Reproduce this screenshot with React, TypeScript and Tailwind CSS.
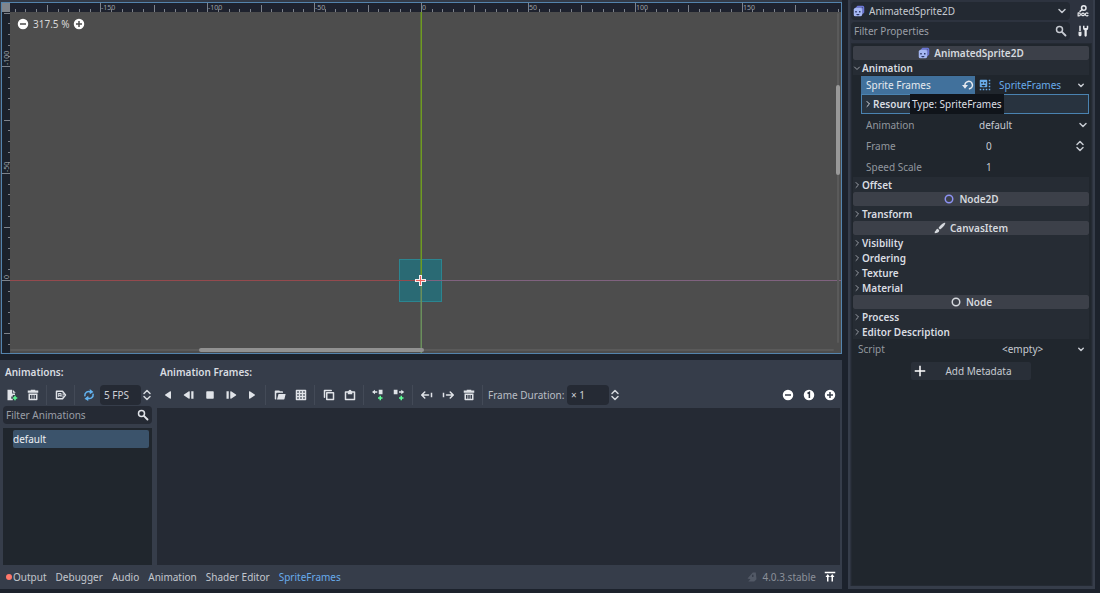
import type { ReactNode } from 'react'

type IconProps = { children: ReactNode; className?: string }

function Icon({ children, className = 'h-3 w-3' }: IconProps) {
  return (
    <svg viewBox="0 0 16 16" fill="currentColor" aria-hidden="true" className={`shrink-0 ${className}`}>
      {children}
    </svg>
  )
}

const line = { fill: 'none', stroke: 'currentColor', strokeWidth: 2, strokeLinejoin: 'round', strokeLinecap: 'round' } as const

const icons = {
  newAnim: (
    <Icon>
      <path d="M2 1v14h7v-2H7v-3h2V8h3V6H8V1zM9 1v4h4z" />
      <path d="M11 9h2v2h2v2h-2v2h-2v-2H9v-2h2z" fill="#5fff97" />
    </Icon>
  ),
  trash: (
    <Icon>
      <path d="M5 1v1H1v3h14V2h-4V1zM2 6v8a1 1 0 0 0 1 1h10a1 1 0 0 0 1-1V6zm2 2h2v5H4zm3 0h2v5H7zm3 0h2v5h-2z" fillRule="evenodd" />
    </Icon>
  ),
  autoplay: (
    <Icon>
      <path d="M2 3h8l4 5-4 5H2z" {...line} />
      <path d="M5 6v4M5 6h3v4M5 8.500h3M10 6.500L11.500 8 10 9.500" {...line} strokeWidth={1.3} />
    </Icon>
  ),
  loop: (
    <Icon>
      <path d="M2.500 9A5 5 0 0 1 10 4M13.500 7A5 5 0 0 1 6 12" {...line} />
      <path d="M9 0v7l5-3zM7 9v7l-5-3z" />
    </Icon>
  ),
  playBack: (
    <Icon><path d="M12 12a1 1 0 0 1-1.600.800l-6-4a1 1 0 0 1 0-1.600l6-4A1 1 0 0 1 12 4z" /></Icon>
  ),
  stepBack: (
    <Icon><path d="M9 12a1 1 0 0 1-1.600.800l-6-4a1 1 0 0 1 0-1.600l6-4A1 1 0 0 1 9 4zM11 3h3v10h-3z" /></Icon>
  ),
  stop: (
    <Icon><rect x="3" y="3" width="10" height="10" rx="1" /></Icon>
  ),
  stepForward: (
    <Icon><path d="M7 12a1 1 0 0 0 1.600.800l6-4a1 1 0 0 0 0-1.600l-6-4A1 1 0 0 0 7 4zM2 3h3v10H2z" /></Icon>
  ),
  play: (
    <Icon><path d="M4 12a1 1 0 0 0 1.600.800l6-4a1 1 0 0 0 0-1.600l-6-4A1 1 0 0 0 4 4z" /></Icon>
  ),
  folder: (
    <Icon>
      <path d="M2 2a1 1 0 0 0-1 1v10a1 1 0 0 0 1 1h1V6a1 1 0 0 1 1-1h8V4a1 1 0 0 0-1-1H8L7 2zM6 6.500L4 14h9a1 1 0 0 0 1-1l1.500-6.500z" />
    </Icon>
  ),
  grid: (
    <Icon>
      <path d="M1 2a1 1 0 0 1 1-1h12a1 1 0 0 1 1 1v12a1 1 0 0 1-1 1H2a1 1 0 0 1-1-1zm2 1v2h2V3zm4 0v2h2V3zm4 0v2h2V3zM3 7v2h2V7zm4 0v2h2V7zm4 0v2h2V7zM3 11v2h2v-2zm4 0v2h2v-2zm4 0v2h2v-2z" fillRule="evenodd" />
    </Icon>
  ),
  copy: (
    <Icon>
      <path d="M2 11V2h9" {...line} />
      <rect x="5" y="5" width="9" height="9" {...line} />
    </Icon>
  ),
  paste: (
    <Icon>
      <rect x="2" y="4" width="12" height="10" {...line} />
      <path d="M5 3h1a2 2 0 0 1 4 0h1v4H5z" />
    </Icon>
  ),
  insertBefore: (
    <Icon>
      <path d="M4 1L0 4l4 3V5h3V3H4zM9 1h5v6H9z" />
      <path d="M10 9h2v2h2v2h-2v2h-2v-2H8v-2h2z" fill="#5fff97" />
    </Icon>
  ),
  insertAfter: (
    <Icon>
      <path d="M1 1h5v6H1zM11 1l4 3-4 3V5H8V3h3z" />
      <path d="M10 9h2v2h2v2h-2v2h-2v-2H8v-2h2z" fill="#5fff97" />
    </Icon>
  ),
  moveLeft: (
    <Icon>
      <path d="M5 4L1 8l4 4M2 8h8" {...line} />
      <path d="M13 5h2v6h-2z" />
    </Icon>
  ),
  moveRight: (
    <Icon>
      <path d="M11 4l4 4-4 4M14 8H6" {...line} />
      <path d="M1 5h2v6H1z" />
    </Icon>
  ),
  zoomOut: (
    <Icon><path d="M8 1a7 7 0 1 0 0 14A7 7 0 0 0 8 1zM4 7h8v2H4z" fillRule="evenodd" /></Icon>
  ),
  zoomReset: (
    <Icon>
      <circle cx="8" cy="8" r="7" />
      <path d="M6 6L8.500 4.500V12" fill="none" stroke="#2c323e" strokeWidth="2" />
    </Icon>
  ),
  zoomIn: (
    <Icon><path d="M8 1a7 7 0 1 0 0 14A7 7 0 0 0 8 1zM7 4h2v3h3v2H9v3H7V9H4V7h3z" fillRule="evenodd" /></Icon>
  ),
  search: (
    <Icon>
      <circle cx="6" cy="6" r="4" {...line} />
      <path d="M9.500 9.500L14 14" {...line} strokeWidth={2.500} />
    </Icon>
  ),
  chevronDown: (
    <Icon><path d="M4 6l4 4 4-4" {...line} /></Icon>
  ),
  chevronSmall: (
    <Icon><path d="M5 7l3 3 3-3" {...line} /></Icon>
  ),
  updown: (
    <Icon><path d="M4 6l4-4 4 4M4 10l4 4 4-4" {...line} /></Icon>
  ),
  expandPanel: (
    <Icon>
      <path d="M1 1h14v2H1zM5 4l3 4H6v6H4V8H2zM11 4l3 4h-2v6h-2V8H8z" />
    </Icon>
  ),
  doc: (
    <Icon>
      <circle cx="9" cy="4" r="3" {...line} />
      <path d="M7 6L4 8.500" {...line} />
      <path d="M1.500 10.500v4M1.500 10.500h1a2 2 0 0 1 0 4h-1M14.500 11a2 2 0 1 0 0 3" {...line} strokeWidth={1.600} />
      <circle cx="8" cy="12.500" r="1.800" {...line} strokeWidth={1.600} />
    </Icon>
  ),
  tools: (
    <Icon>
      <path d="M3 1h2v7H3zM2 9h4v4a2 2 0 0 1-4 0zM8 1v3a3 3 0 0 0 2 3v7a1 1 0 0 0 3 0V7a3 3 0 0 0 2-3V1h-2v3h-3V1z" />
    </Icon>
  ),
  sprite: (
    <Icon>
      <path d="M6 1h7a2 2 0 0 1 2 2v7l-2 2V3H4z" fill="#6b76d6" />
      <path d="M4 3h7a2 2 0 0 1 2 2v7l-2 2V5H2z" fill="#8792ee" />
      <rect x="1" y="4" width="11" height="11" rx="2" fill="#a5b7f3" />
      <path d="M3 8h2v2H3zM8 8h2v2H8zM4 12h5l-1.500 1.500h-2z" fill="#2c3868" />
    </Icon>
  ),
  frames: (
    <Icon>
      <path d="M2 1h8a1 1 0 0 1 1 1v8a1 1 0 0 1-1 1H2a1 1 0 0 1-1-1V2a1 1 0 0 1 1-1zm1 3v2h2V4zm4 0v2h2V4zM3 8l2 2h2l2-2z" fillRule="evenodd" />
      <path d="M13 1h2v2h-2zM13 5h2v2h-2zM13 9h2v2h-2zM13 13h2v2h-2zM9 13h2v2H9zM5 13h2v2H5zM1 13h2v2H1z" />
    </Icon>
  ),
  revert: (
    <Icon>
      <path d="M4 9a5 5 0 1 1 6 4" {...line} />
      <path d="M0 8h8l-4 5z" />
    </Icon>
  ),
  node2d: (
    <Icon><circle cx="8" cy="8" r="5" fill="none" stroke="#8d92f3" strokeWidth="2" /></Icon>
  ),
  node: (
    <Icon><circle cx="8" cy="8" r="5" fill="none" stroke="currentColor" strokeWidth="2" /></Icon>
  ),
  brush: (
    <Icon>
      <path d="M14 1c-3 1-6 4-8 7l2 2c3-2 6-5 7-8 0-1 0-1-1-1zM5 9c-2 0-2 2-4 4v2c3 0 6-1 6-4z" />
    </Icon>
  ),
  plus: (
    <Icon><path d="M7 1v6H1v2h6v6h2V9h6V7H9V1z" /></Icon>
  ),
}

// Ruler spacing: one unit of the 2D scene is drawn 2.138px wide.
const ORIGIN_X = 419
const ORIGIN_Y = 277
const TICKS = Array.from({ length: 90 }, (_, i) => (i - 45) * 5)

function Canvas() {
  return (
    <div className="relative min-h-0 flex-1 overflow-hidden border border-[#5484ad] bg-[#4d4d4d]">
      <svg className="absolute h-full w-full" aria-label="2D scene">
        <rect x="0" y="0" width="100%" height="9" fill="#1e222e" />
        <rect x="0" y="0" width="8" height="100%" fill="#1b212b" />
        {TICKS.map((unit) => {
          const x = Math.round(ORIGIN_X + unit * 2.138)
          const major = unit % 50 === 0
          const size = major ? 9 : unit % 25 === 0 ? 7 : 3
          if (x < 9) return null
          return (
            <g key={unit}>
              <rect x={x} y={9 - size} width="1" height={size} fill="#7d828b" />
              {major && x < 800 && <text x={x + 1} y="7" fontSize="7" fill="#9da1a8">{unit}</text>}
            </g>
          )
        })}
        {TICKS.map((unit) => {
          const y = Math.round(ORIGIN_Y + unit * 2.138)
          const major = unit % 50 === 0
          const size = major ? 8 : unit % 25 === 0 ? 6 : 2
          if (y < 10 || y > 349) return null
          return (
            <g key={unit}>
              <rect x={8 - size} y={y} width={size} height="1" fill="#7d828b" />
              {major && <text transform={`translate(7 ${y - 1}) rotate(-90)`} fontSize="7" fill="#9da1a8">{unit}</text>}
            </g>
          )
        })}
        <rect x="0" y="0" width="8" height="9" fill="#80858c" />

        <rect x="397" y="256" width="43" height="43" fill="#2a6a74" />
        <rect x="397.5" y="256.5" width="42" height="42" fill="none" stroke="#2b8590" />
        <rect x="8" y={ORIGIN_Y} width={ORIGIN_X - 8} height="1" fill="#944a4e" />
        <rect x={ORIGIN_X} y={ORIGIN_Y} width="100%" height="1" fill="#80627f" />
        <rect x={ORIGIN_X - 0.5} y="9" width="1.500" height={ORIGIN_Y - 9} fill="#6f9b21" />
        <rect x={ORIGIN_X - 0.5} y={ORIGIN_Y} width="1.500" height="100%" fill="#6a8f5c" />
        <path d="M417 272h3v4h4v3h-4v4h-3v-4h-4v-3h4z" fill="#f4eeee" />
        <path d="M418 273h1v4h4v1h-4v4h-1v-4h-4v-1h4z" fill="#f0605c" />

        <rect x="8" y="346" width="824" height="2" rx="1" fill="#5a5a5a" />
        <rect x="197" y="345" width="225" height="4" rx="2" fill="#919191" />
        <rect x="835" y="10" width="2" height="330" rx="1" fill="#5a5a5a" />
        <rect x="834" y="82" width="4" height="90" rx="2" fill="#999999" />
      </svg>
      <div className="relative mt-3.5 ml-[15px] flex w-fit items-center gap-1 text-white">
        <button aria-label="Zoom out">{icons.zoomOut}</button>
        <span className="text-[#d8d8d8]">317.5 %</span>
        <button aria-label="Zoom in">{icons.zoomIn}</button>
      </div>
    </div>
  )
}

type ToolButtonProps = { label: string; icon: ReactNode; color?: string }

function ToolButton({ label, icon, color = 'text-[#e0e3e8]' }: ToolButtonProps) {
  return (
    <button aria-label={label} title={label} className={`flex h-5 w-[21px] shrink-0 items-center justify-center ${color}`}>
      {icon}
    </button>
  )
}

function Separator() {
  return <span className="mx-[3px] h-5 w-px shrink-0 bg-[#434a57]" />
}

const tabs = ['Debugger', 'Audio', 'Animation', 'Shader Editor']

function BottomPanel() {
  return (
    <section className="bg-[#363d4a]">
      <div className="flex gap-1 pr-0.5">
        <div className="flex w-[152px] shrink-0 flex-col">
          <h2 className="mt-1 h-[21px] pl-[5px] leading-4 font-semibold text-[#d9dce1]">Animations:</h2>
          <div className="flex h-5 items-center pl-px">
            <ToolButton label="Add Animation" icon={icons.newAnim} />
            <ToolButton label="Delete Animation" icon={icons.trash} />
            <Separator />
            <ToolButton label="Autoplay on Load" icon={icons.autoplay} />
            <Separator />
            <ToolButton label="Animation Looping" icon={icons.loop} color="text-[#62b3f0]" />
            <input aria-label="Animation Speed" defaultValue="5 FPS" className="ml-px h-5 w-[41px] rounded-sm bg-[#252a34] pl-1 text-[#cdd0d6] outline-none" />
            <button aria-label="Change speed" className="text-[#d5d8dd]">{icons.updown}</button>
          </div>
          <label className="mt-px ml-[3px] flex h-[18px] w-[149px] items-center rounded-sm bg-[#252a34] px-[3px]">
            <input aria-label="Filter Animations" placeholder="Filter Animations" className="min-w-0 flex-1 bg-transparent outline-none placeholder:text-[#9a9ea6]" />
            <span className="text-[#e0e3e8]">{icons.search}</span>
          </label>
          <ul className="mt-1 ml-[3px] min-h-[137px] flex-1 bg-[#20262d] pt-0.5 pr-[3px] pl-2.5">
            <li>
              <button className="block h-[18px] w-full rounded-xs bg-[#3b536b] text-left leading-4 text-[#eef0f3]">default</button>
            </li>
          </ul>
        </div>

        <div className="flex min-w-0 flex-1 flex-col">
          <h2 className="mt-1 h-[21px] pl-1 leading-4 font-semibold text-[#d9dce1]">Animation Frames:</h2>
          <div className="flex h-5 items-center pl-px">
            <ToolButton label="Play backwards" icon={icons.playBack} />
            <ToolButton label="Play backwards from end" icon={icons.stepBack} />
            <ToolButton label="Stop" icon={icons.stop} />
            <ToolButton label="Play from start" icon={icons.stepForward} />
            <ToolButton label="Play" icon={icons.play} />
            <Separator />
            <ToolButton label="Add frame from file" icon={icons.folder} />
            <ToolButton label="Add frames from sprite sheet" icon={icons.grid} />
            <Separator />
            <ToolButton label="Copy" icon={icons.copy} />
            <ToolButton label="Paste" icon={icons.paste} />
            <Separator />
            <ToolButton label="Insert Empty (Before)" icon={icons.insertBefore} />
            <ToolButton label="Insert Empty (After)" icon={icons.insertAfter} />
            <Separator />
            <ToolButton label="Move left" icon={icons.moveLeft} />
            <ToolButton label="Move right" icon={icons.moveRight} />
            <ToolButton label="Delete Frame" icon={icons.trash} />
            <Separator />
            <label htmlFor="duration" className="ml-0.5 w-[79px] shrink-0 whitespace-nowrap text-[#b9bdc5]">Frame Duration:</label>
            <input id="duration" defaultValue="× 1" className="h-5 w-[42px] rounded-sm bg-[#252a34] pl-1 text-[#cdd0d6] outline-none" />
            <button aria-label="Change duration" className="text-[#d5d8dd]">{icons.updown}</button>
            <div className="ml-auto flex">
              <ToolButton label="Zoom Out" icon={icons.zoomOut} color="text-white" />
              <ToolButton label="Zoom Reset" icon={icons.zoomReset} color="text-white" />
              <ToolButton label="Zoom In" icon={icons.zoomIn} color="text-white" />
            </div>
          </div>
          <div className="mt-[3px] ml-px flex-1 bg-[#252a34]" />
        </div>
      </div>

      <nav className="flex h-6 items-center gap-[9px] px-1.5 text-[#c3c7ce]">
        <button className="flex items-center gap-px">
          <span className="h-1.5 w-1.5 rounded-full bg-[#ff786b]" />
          Output
        </button>
        {tabs.map((tab) => (
          <button key={tab}>{tab}</button>
        ))}
        <button className="text-[#68abea]">SpriteFrames</button>
        <div className="ml-auto flex items-center gap-2">
          <span className="-mr-1 text-[#525966]">
            <Icon><path d="M9 2h4l1 9-3 3H3l3-3-4-1zM8 5v3h2V5z" fillRule="evenodd" /></Icon>
          </span>
          <span className="text-[#8b9099]">4.0.3.stable</span>
          <button aria-label="Expand Bottom Panel" className="text-white">{icons.expandPanel}</button>
        </div>
      </nav>
    </section>
  )
}

function Category({ icon, name }: { icon: ReactNode; name: string }) {
  return (
    <h2 className="flex h-3.5 items-center justify-center gap-1 rounded-xs bg-[#3c4049] font-semibold text-[#d6d9de]">
      {icon}
      {name}
    </h2>
  )
}

function Section({ name, open = false }: { name: string; open?: boolean }) {
  return (
    <button aria-expanded={open} className="flex h-[15px] w-full items-center gap-px bg-[#262c34] font-semibold text-[#dadde2]">
      <Icon className="h-2 w-2 text-[#9a9ea6]">
        <path d={open ? 'M3 6l5 5 5-5' : 'M6 3l5 5-5 5'} {...line} />
      </Icon>
      {name}
    </button>
  )
}

const selectStyle = 'min-w-0 flex-1 appearance-none bg-transparent outline-none'

function Inspector() {
  return (
    <aside className="flex w-[247px] shrink-0 flex-col border-x-2 border-[#363d4a] bg-[#2d333f] px-px text-[#c6cad1]">
      <div className="flex h-[41px] gap-1 pt-0.5">
        <div className="flex flex-1 flex-col gap-0.5">
          <div className="flex h-[18px] items-center gap-1 rounded-sm bg-[#232932] px-0.5">
            {icons.sprite}
            <select aria-label="Edited object" className={selectStyle}>
              <option>AnimatedSprite2D</option>
            </select>
            {icons.chevronDown}
          </div>
          <label className="flex h-[18px] items-center rounded-sm bg-[#232932] px-[3px]">
            <input aria-label="Filter Properties" placeholder="Filter Properties" className="min-w-0 flex-1 bg-transparent outline-none placeholder:text-[#9a9ea6]" />
            {icons.search}
          </label>
        </div>
        <div className="flex w-[18px] flex-col items-center gap-0.5 text-[#e8eaee]">
          <button aria-label="Open documentation" className="flex h-[18px] items-center">{icons.doc}</button>
          <button aria-label="Property tools" className="flex h-[18px] items-center">{icons.tools}</button>
        </div>
      </div>

      <div className="mt-0.5 flex-1 border border-[#242a33] bg-[#20262d] pt-0.5 pr-0.5 pl-px">
        <Category icon={icons.sprite} name="AnimatedSprite2D" />
        <Section name="Animation" open />

        <div className="ml-2 pt-px">
          <div className="flex h-[18px] items-center">
            <div className="flex h-full w-[114px] shrink-0 items-center justify-between bg-[#41719c] pr-px pl-[5px] text-[#e6eaef]">
              Sprite Frames
              <button aria-label="Revert value">{icons.revert}</button>
            </div>
            <div className="flex min-w-0 flex-1 items-center gap-2 pr-0.5 pl-1 text-[#68abea]">
              {icons.frames}
              <select aria-label="Sprite Frames" className={selectStyle}>
                <option>SpriteFrames</option>
              </select>
              <span className="text-[#c6cad1]">{icons.chevronSmall}</span>
            </div>
          </div>
          <div className="relative flex h-5 items-center border border-[#4a83b1] bg-[#28333f] pl-0.5">
            <button aria-expanded="false" className="flex items-center gap-px font-semibold text-[#dadde2]">
              <Icon className="h-2 w-2"><path d="M6 3l5 5-5 5" {...line} /></Icon>
              Resource
            </button>
            <div role="tooltip" className="absolute -top-px left-12 flex h-5 w-fit items-center bg-[#10141a] px-0.5 whitespace-nowrap text-[#dcdfe4]">
              Type: SpriteFrames
            </div>
          </div>

          <div className="flex h-[21px] items-center pl-[5px]">
            <label htmlFor="animation" className="w-[113px] text-[#92979e]">Animation</label>
            <select id="animation" className={selectStyle}>
              <option>default</option>
            </select>
            {icons.chevronDown}
          </div>
          <div className="flex h-[21px] items-center pr-[3px] pl-[5px]">
            <label htmlFor="frame" className="w-[120px] text-[#92979e]">Frame</label>
            <input id="frame" defaultValue="0" className="min-w-0 flex-1 bg-transparent outline-none" />
            <button aria-label="Change frame">{icons.updown}</button>
          </div>
          <div className="flex h-[21px] items-center pl-[5px]">
            <label htmlFor="speed" className="w-[120px] text-[#92979e]">Speed Scale</label>
            <input id="speed" defaultValue="1" className="min-w-0 flex-1 bg-transparent outline-none" />
          </div>
        </div>

        <Section name="Offset" />
        <Category icon={icons.node2d} name="Node2D" />
        <Section name="Transform" />
        <Category icon={icons.brush} name="CanvasItem" />
        <Section name="Visibility" />
        <Section name="Ordering" />
        <Section name="Texture" />
        <Section name="Material" />
        <Category icon={icons.node} name="Node" />
        <Section name="Process" />
        <Section name="Editor Description" />

        <div className="flex h-5 items-center pr-0.5 pl-[5px]">
          <label htmlFor="script" className="w-36 text-[#92979e]">Script</label>
          <select id="script" className={selectStyle}>
            <option>&lt;empty&gt;</option>
          </select>
          {icons.chevronSmall}
        </div>
        <button className="mx-auto mt-[3px] flex h-[18px] w-[120px] items-center rounded-xs bg-[#292f38] pl-[3px]">
          <span className="text-white">{icons.plus}</span>
          <span className="flex-1">Add Metadata</span>
        </button>
      </div>
      <div className="-mx-px h-[3px] bg-[#363d4a]" />
    </aside>
  )
}

export default function App() {
  return (
    <div className="flex min-h-screen gap-1.5 bg-[#1c222c] pr-[5px] pb-1 font-['Noto_Sans',sans-serif] text-[10px] leading-[14px]">
      <main className="flex min-w-0 flex-1 flex-col gap-1.5">
        <div className="flex flex-1 flex-col bg-[#333a47] pt-0.5 pl-px">
          <Canvas />
        </div>
        <BottomPanel />
      </main>
      <Inspector />
    </div>
  )
}
